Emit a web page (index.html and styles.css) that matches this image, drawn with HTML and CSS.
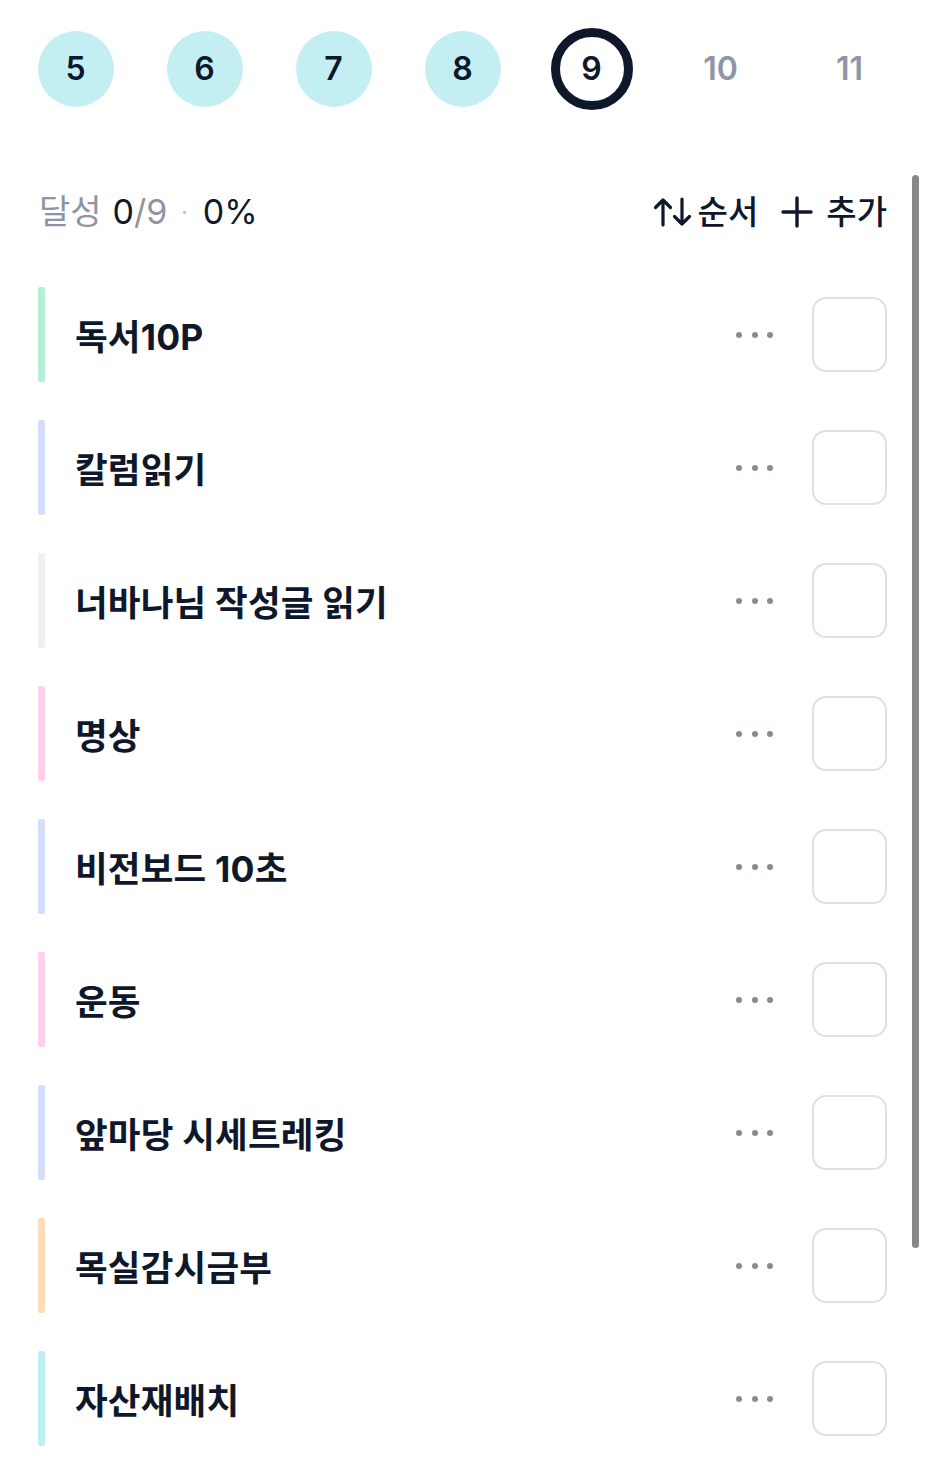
FILE: index.html
```html
<!DOCTYPE html>
<html lang="ko">
<head>
<meta charset="utf-8">
<link rel="stylesheet" href="styles.css">
</head>
<body>
<div class="page">
  <div class="days">
    <div class="day"><span class="dot-day done">5</span></div>
    <div class="day"><span class="dot-day done">6</span></div>
    <div class="day"><span class="dot-day done">7</span></div>
    <div class="day"><span class="dot-day done">8</span></div>
    <div class="day"><span class="dot-day current">9</span></div>
    <div class="day"><span class="dot-day future">10</span></div>
    <div class="day"><span class="dot-day future">11</span></div>
  </div>

  <div class="summary">
    <div class="stats">
      <span class="muted">달성</span>
      <span class="num"><span class="dark">0</span><span class="muted">/9</span></span>
      <span class="sep">·</span>
      <span class="dark num">0%</span>
    </div>
    <div class="actions">
      <button class="action">
        <svg class="ico-sort" width="40" height="32" viewBox="0 0 40 32" fill="none" stroke="#0f172a" stroke-width="3.2" stroke-linecap="round" stroke-linejoin="round">
          <path d="M10 29V4M2.5 11.5L10 4l7.5 7.5"/>
          <path d="M29 3v25M21.5 20.5L29 28l7.5-7.5"/>
        </svg>
        <span>순서</span>
      </button>
      <button class="action">
        <svg class="ico-plus" width="32" height="32" viewBox="0 0 32 32" fill="none" stroke="#0f172a" stroke-width="3.4" stroke-linecap="round">
          <path d="M16 2v28M2 16h28"/>
        </svg>
        <span>추가</span>
      </button>
    </div>
  </div>

  <ul class="list">
    <li class="item"><span class="bar mint"></span><span class="title">독서10P</span><span class="more"><i></i><i></i><i></i></span><span class="check"></span></li>
    <li class="item"><span class="bar blue"></span><span class="title">칼럼읽기</span><span class="more"><i></i><i></i><i></i></span><span class="check"></span></li>
    <li class="item"><span class="bar gray"></span><span class="title">너바나님 작성글 읽기</span><span class="more"><i></i><i></i><i></i></span><span class="check"></span></li>
    <li class="item"><span class="bar pink"></span><span class="title">명상</span><span class="more"><i></i><i></i><i></i></span><span class="check"></span></li>
    <li class="item"><span class="bar blue"></span><span class="title">비전보드 10초</span><span class="more"><i></i><i></i><i></i></span><span class="check"></span></li>
    <li class="item"><span class="bar pink"></span><span class="title">운동</span><span class="more"><i></i><i></i><i></i></span><span class="check"></span></li>
    <li class="item"><span class="bar blue"></span><span class="title">앞마당 시세트레킹</span><span class="more"><i></i><i></i><i></i></span><span class="check"></span></li>
    <li class="item"><span class="bar peach"></span><span class="title">목실감시금부</span><span class="more"><i></i><i></i><i></i></span><span class="check"></span></li>
    <li class="item"><span class="bar cyan"></span><span class="title">자산재배치</span><span class="more"><i></i><i></i><i></i></span><span class="check"></span></li>
  </ul>

  <div class="scrollbar"></div>
</div>
</body>
</html>
```

FILE: styles.css
```css
* { box-sizing: border-box; }
html, body { margin: 0; padding: 0; background: #ffffff; }
body {
  font-family: Inter, "Noto Sans CJK KR", "Noto Sans", sans-serif;
  color: #0f172a;
  width: 926px;
  height: 1463px;
  overflow: hidden;
}
.page { position: relative; height: 1463px; }

.days {
  display: flex;
  height: 138px;
  align-items: center;
  padding-left: 11px;
}
.day {
  width: 129px;
  display: flex;
  justify-content: center;
  align-items: center;
}
.dot-day {
  width: 76px;
  height: 76px;
  border-radius: 50%;
  display: flex;
  align-items: center;
  justify-content: center;
  font-size: 32px;
  font-weight: 600;
  line-height: 1;
}
.dot-day.done { background: #c3eff3; color: #0f172a; }
.dot-day.current {
  width: 82px;
  height: 82px;
  border: 9px solid #0f172a;
  color: #0f172a;
}
.dot-day.future { color: #8e95a3; }

.summary {
  display: flex;
  justify-content: space-between;
  align-items: center;
  height: 60px;
  margin-top: 44px;
  padding: 0 39px 0 39px;
}
.stats {
  display: flex;
  align-items: center;
  gap: 10px;
  font-size: 34px;
  font-weight: 400;
  line-height: 1;
}
.muted { color: #8d94a3; }
.dark { color: #0f172a; }
.num { margin-left: 1px; }
.sep { color: #b5bac4; font-size: 22px; margin: 0 4px; }
.actions {
  display: flex;
  align-items: center;
  gap: 23px;
}
.action {
  display: flex;
  align-items: center;
  gap: 5px;
  border: 0;
  background: none;
  padding: 0;
  font-family: inherit;
  font-size: 33px;
  font-weight: 500;
  color: #0f172a;
  line-height: 1;
}
.action .ico-plus { margin-right: 8px; }

.list {
  list-style: none;
  margin: 45px 0 0;
  padding: 0 39px 0 38px;
}
.item {
  display: flex;
  align-items: center;
  height: 95px;
  margin-bottom: 38px;
}
.bar {
  width: 7px;
  height: 95px;
  border-radius: 2px;
  flex: none;
}
.bar.mint { background: #b4f0d6; }
.bar.blue { background: #d4ddfb; }
.bar.gray { background: #f0f0f2; }
.bar.pink { background: #fcd1eb; }
.bar.peach { background: #fddcb8; }
.bar.cyan { background: #bdeff4; }
.title {
  flex: 1;
  margin-left: 30px;
  font-size: 35.5px;
  font-weight: 700;
  color: #0f172a;
  letter-spacing: 0.2px;
}
.more {
  display: flex;
  gap: 9.5px;
  margin-right: 39px;
}
.more i {
  width: 6px;
  height: 6px;
  border-radius: 50%;
  background: #868b98;
}
.check {
  width: 75px;
  height: 75px;
  border: 2px solid #dfe0e4;
  border-radius: 14px;
  flex: none;
}

.scrollbar {
  position: absolute;
  left: 912px;
  top: 175px;
  width: 7px;
  height: 1073px;
  background: #888888;
  border-radius: 4px;
}
```
